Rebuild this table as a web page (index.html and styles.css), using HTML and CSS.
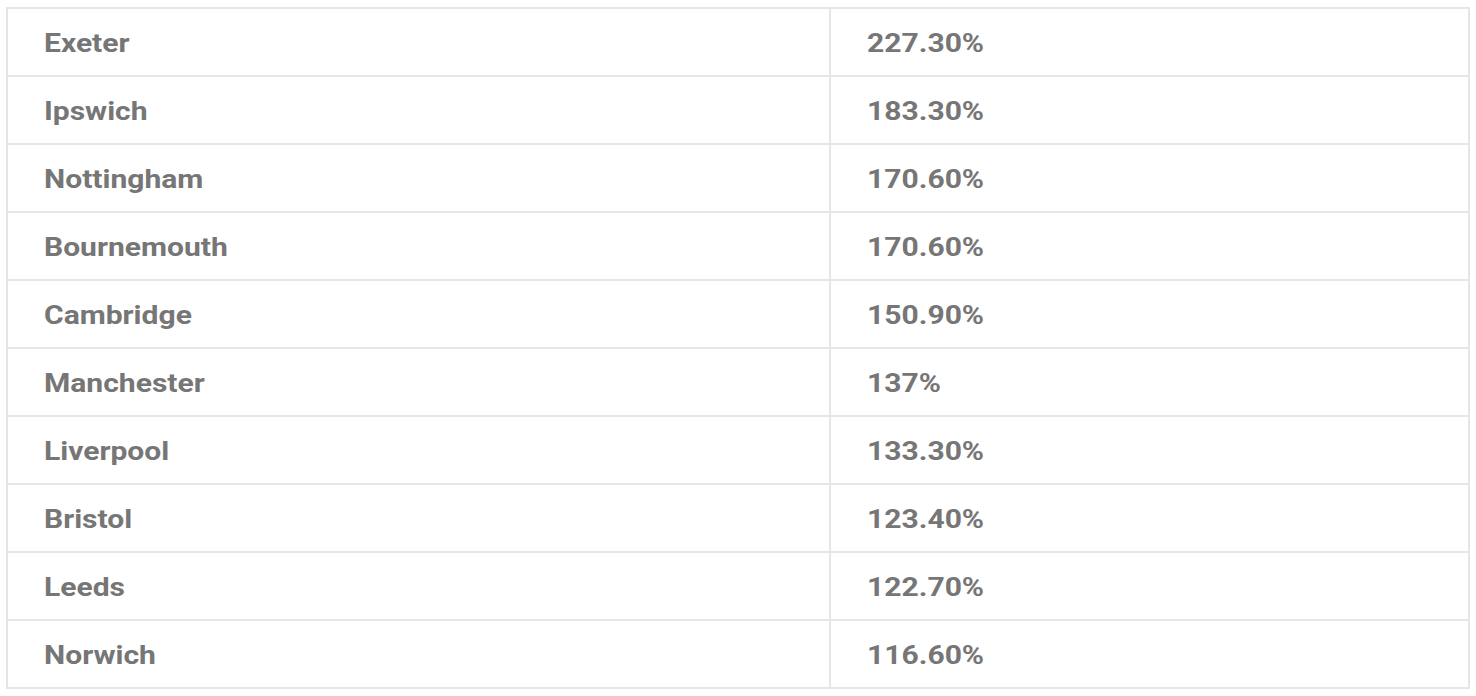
FILE: index.html
```html
<!DOCTYPE html>
<html>
<head>
<meta charset="utf-8">
<link rel="stylesheet" href="styles.css">
</head>
<body>
<table class="rank-table">
  <colgroup><col class="col-city"><col class="col-value"></colgroup>
  <tbody>
    <tr><td><span class="cell-text">Exeter</span></td><td><span class="cell-text">227.30%</span></td></tr>
    <tr><td><span class="cell-text">Ipswich</span></td><td><span class="cell-text">183.30%</span></td></tr>
    <tr><td><span class="cell-text">Nottingham</span></td><td><span class="cell-text">170.60%</span></td></tr>
    <tr><td><span class="cell-text">Bournemouth</span></td><td><span class="cell-text">170.60%</span></td></tr>
    <tr><td><span class="cell-text">Cambridge</span></td><td><span class="cell-text">150.90%</span></td></tr>
    <tr><td><span class="cell-text">Manchester</span></td><td><span class="cell-text">137%</span></td></tr>
    <tr><td><span class="cell-text">Liverpool</span></td><td><span class="cell-text">133.30%</span></td></tr>
    <tr><td><span class="cell-text">Bristol</span></td><td><span class="cell-text">123.40%</span></td></tr>
    <tr><td><span class="cell-text">Leeds</span></td><td><span class="cell-text">122.70%</span></td></tr>
    <tr><td><span class="cell-text">Norwich</span></td><td><span class="cell-text">116.60%</span></td></tr>
  </tbody>
</table>
</body>
</html>
```
FILE: styles.css
```css
html, body { background: #ffffff; }
body { margin: 7px 6px; }
.rank-table {
  width: 1464px;
  table-layout: fixed;
  border-collapse: separate;
  border-spacing: 0;
  border-top: 2px solid #e6e6e6;
  border-left: 2px solid #e6e6e6;
  font-family: Roboto, "Liberation Sans", sans-serif;
  font-weight: 700;
  font-size: 26px;
  color: #767676;
}
.col-city { width: 823px; }
.col-value { width: 639px; }
.rank-table td {
  height: 66px;
  padding: 2px 0 0 36px;
  border-right: 2px solid #e6e6e6;
  border-bottom: 2px solid #e6e6e6;
  vertical-align: middle;
  box-sizing: border-box;
}
.rank-table tr { height: 68px; }
.cell-text {
  display: inline-block;
  transform: scaleX(1.155);
  transform-origin: left center;
}
```
